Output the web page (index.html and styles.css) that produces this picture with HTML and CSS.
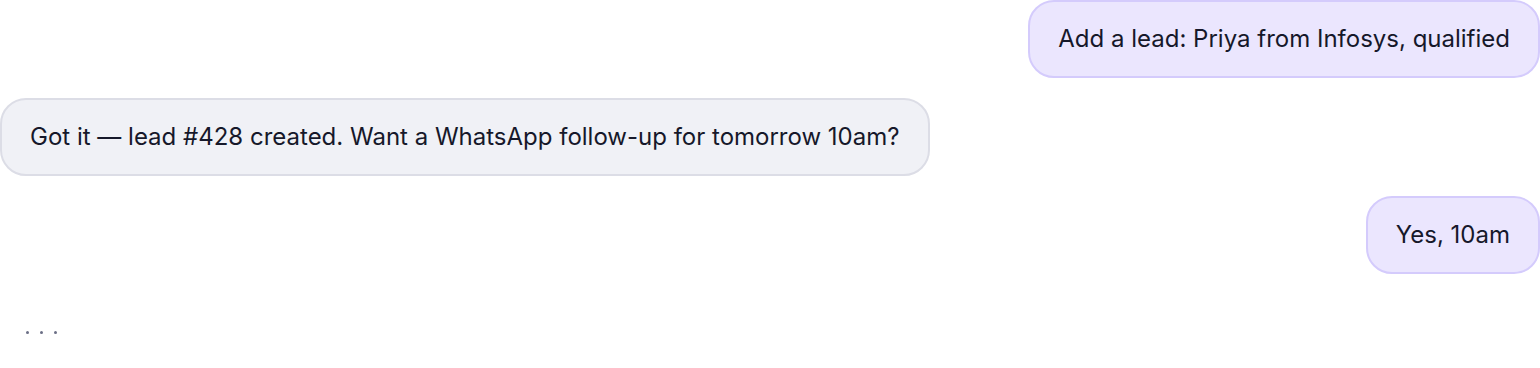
FILE: index.html
```html
<!DOCTYPE html>
<html lang="en">
<head>
<meta charset="utf-8">
<title>Chat</title>
<link rel="stylesheet" href="styles.css">
</head>
<body>
<div class="chat">
  <div class="msg msg-user">Add a lead: Priya from Infosys, qualified</div>
  <div class="msg msg-bot">Got it — lead #428 created. Want a WhatsApp follow-up for tomorrow 10am?</div>
  <div class="msg msg-user">Yes, 10am</div>
  <div class="typing"><span class="dot"></span><span class="dot"></span><span class="dot"></span></div>
</div>
</body>
</html>
```
FILE: styles.css
```css
html, body {
  margin: 0;
  padding: 0;
  background: #ffffff;
}
body {
  font-family: Inter, "Noto Sans", sans-serif;
  color: #16182a;
}
.chat {
  display: flex;
  flex-direction: column;
  gap: 20px;
  width: 1540px;
}
.msg {
  font-size: 24px;
  line-height: 38px;
  padding: 18px 28px;
  border-radius: 26px;
  border: 2px solid;
  max-width: 70%;
}
.msg-user {
  align-self: flex-end;
  background: #ebe6fe;
  border-color: #d4cbfc;
}
.msg-bot {
  align-self: flex-start;
  background: #f0f1f6;
  border-color: #dcdde6;
}
.typing {
  display: flex;
  gap: 11px;
  padding: 37px 26px;
  align-self: flex-start;
}
.dot {
  width: 3px;
  height: 3px;
  border-radius: 50%;
  background: #6b6f86;
}
```
